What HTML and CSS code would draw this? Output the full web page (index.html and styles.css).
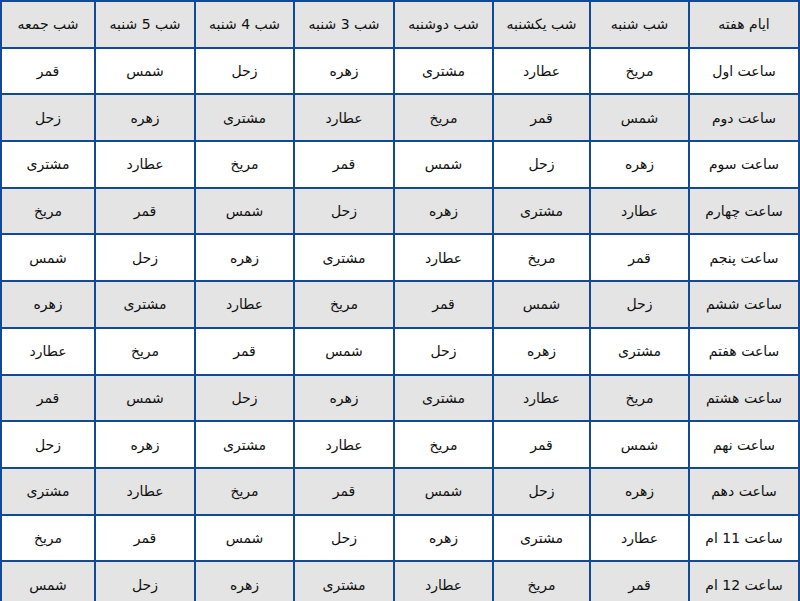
FILE: index.html
```html
<!DOCTYPE html>
<html lang="fa" dir="rtl">
<head>
<meta charset="utf-8">
<link rel="stylesheet" href="styles.css">
</head>
<body>
<div class="grid">
  <div class="c h">ایام هفته</div><div class="c h">شب شنبه</div><div class="c h">شب یکشنبه</div><div class="c h">شب دوشنبه</div><div class="c h">شب 3 شنبه</div><div class="c h">شب 4 شنبه</div><div class="c h">شب 5 شنبه</div><div class="c h">شب جمعه</div>
  <div class="c">ساعت اول</div><div class="c">مریخ</div><div class="c">عطارد</div><div class="c">مشتری</div><div class="c">زهره</div><div class="c">زحل</div><div class="c">شمس</div><div class="c">قمر</div>
  <div class="c g">ساعت دوم</div><div class="c g">شمس</div><div class="c g">قمر</div><div class="c g">مریخ</div><div class="c g">عطارد</div><div class="c g">مشتری</div><div class="c g">زهره</div><div class="c g">زحل</div>
  <div class="c">ساعت سوم</div><div class="c">زهره</div><div class="c">زحل</div><div class="c">شمس</div><div class="c">قمر</div><div class="c">مریخ</div><div class="c">عطارد</div><div class="c">مشتری</div>
  <div class="c g">ساعت چهارم</div><div class="c g">عطارد</div><div class="c g">مشتری</div><div class="c g">زهره</div><div class="c g">زحل</div><div class="c g">شمس</div><div class="c g">قمر</div><div class="c g">مریخ</div>
  <div class="c">ساعت پنجم</div><div class="c">قمر</div><div class="c">مریخ</div><div class="c">عطارد</div><div class="c">مشتری</div><div class="c">زهره</div><div class="c">زحل</div><div class="c">شمس</div>
  <div class="c g">ساعت ششم</div><div class="c g">زحل</div><div class="c g">شمس</div><div class="c g">قمر</div><div class="c g">مریخ</div><div class="c g">عطارد</div><div class="c g">مشتری</div><div class="c g">زهره</div>
  <div class="c">ساعت هفتم</div><div class="c">مشتری</div><div class="c">زهره</div><div class="c">زحل</div><div class="c">شمس</div><div class="c">قمر</div><div class="c">مریخ</div><div class="c">عطارد</div>
  <div class="c g">ساعت هشتم</div><div class="c g">مریخ</div><div class="c g">عطارد</div><div class="c g">مشتری</div><div class="c g">زهره</div><div class="c g">زحل</div><div class="c g">شمس</div><div class="c g">قمر</div>
  <div class="c">ساعت نهم</div><div class="c">شمس</div><div class="c">قمر</div><div class="c">مریخ</div><div class="c">عطارد</div><div class="c">مشتری</div><div class="c">زهره</div><div class="c">زحل</div>
  <div class="c g">ساعت دهم</div><div class="c g">زهره</div><div class="c g">زحل</div><div class="c g">شمس</div><div class="c g">قمر</div><div class="c g">مریخ</div><div class="c g">عطارد</div><div class="c g">مشتری</div>
  <div class="c">ساعت 11 ام</div><div class="c">عطارد</div><div class="c">مشتری</div><div class="c">زهره</div><div class="c">زحل</div><div class="c">شمس</div><div class="c">قمر</div><div class="c">مریخ</div>
  <div class="c g">ساعت 12 ام</div><div class="c g">قمر</div><div class="c g">مریخ</div><div class="c g">عطارد</div><div class="c g">مشتری</div><div class="c g">زهره</div><div class="c g">زحل</div><div class="c g">شمس</div>
</div>
</body>
</html>
```
FILE: styles.css
```css
html, body {
  margin: 0;
  padding: 0;
  background: #ffffff;
  overflow: hidden;
}
.grid {
  display: grid;
  direction: rtl;
  width: 800px;
  box-sizing: border-box;
  padding: 2px;
  gap: 2px;
  background: #104a94;
  grid-template-columns: 108px 97px 95px 97px 98px 97px 98px 92px;
  grid-auto-rows: 44.7px;
  font-family: "DejaVu Sans", "Noto Sans", sans-serif;
  font-size: 14px;
  color: #111111;
}
.c {
  display: flex;
  align-items: center;
  justify-content: center;
  background: #ffffff;
}
.h, .g {
  background: #e4e4e4;
}
```
